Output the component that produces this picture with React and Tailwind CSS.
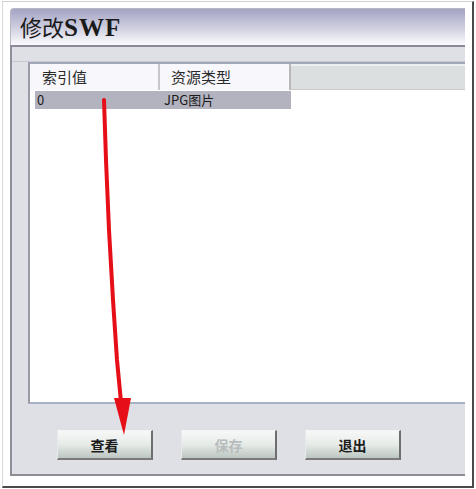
const CJK = { fontFamily: '"Noto Sans CJK SC", "Noto Sans", sans-serif' };

function Btn({ label, disabled }) {
  return (
    <button
      className={
        "w-[96px] h-[30px] border-t border-l border-t-[#f4f4f4] border-l-[#e8e8e8] border-r-2 border-b-2 border-r-[#6e6e6e] border-b-[#7a7a7a] bg-gradient-to-b from-[#f7f8f7] via-[#e6ebe8] to-[#bcc6c1] text-[14px] font-bold leading-none " +
        (disabled ? "text-[#b8bcbc]" : "text-[#1c1c1c]")
      }
      style={CJK}
    >
      {label}
    </button>
  );
}

export default function App() {
  return (
    <div className="relative w-[476px] h-[489px] bg-white overflow-hidden">
      <div className="ml-[2px] mt-[1px] w-[472px] h-[487px] border-t border-l border-t-[#d0d0d0] border-l-[#d8d8d8] border-r-2 border-b-2 border-r-[#4a4a4a] border-b-[#4a4a4a] pl-[7px] pt-[6px]">
        <div className="w-[455px] h-[468px] flex flex-col">
          {/* title bar */}
          <div className="h-[37px] rounded-tl-[4px] border-l border-t border-[#b8b8c4] bg-gradient-to-b from-[#a4a4c4] via-[#cdcddf] to-[#fbfbfd] flex items-center pl-[9px]">
            <span
              className="text-[22px] text-[#1a1a1a] leading-none"
              style={{ fontFamily: '"Liberation Serif", "Noto Sans CJK SC", serif' }}
            >
              修改<span className="text-[25px] font-semibold tracking-[1px]">SWF</span>
            </span>
          </div>
          <div className="h-[2px] bg-[#8a8a98]" />
          {/* body */}
          <div className="flex-1 flex flex-col bg-[#dfdfe6] border-l-2 border-[#8e8e9a] border-b-2 border-b-[#8c8c94]">
            <div className="h-[15px] border-b border-[#c8c8d2]" />
            <div className="ml-[16px] h-[342px] bg-white border-l-2 border-t-2 border-b-2 border-l-[#9a9aa6] border-t-[#a0a8ba] border-b-[#a6b2c4] flex flex-col">
              <div className="flex h-[26px] text-[15px] text-[#2a2a2a]" style={CJK}>
                <div className="w-[130px] bg-[#f8f8fc] border-r-2 border-r-[#c8c8cc] pl-[12px] flex items-center">
                  索引值
                </div>
                <div className="w-[131px] bg-[#f8f8fc] border-r-2 border-r-[#b8b8bc] pl-[11px] flex items-center">
                  资源类型
                </div>
                <div className="flex-1 bg-[#dcdfdf] border-t-2 border-t-[#eef0f0] border-b border-b-[#c8caca]" />
              </div>
              <div
                className="ml-[5px] mt-[1px] w-[256px] h-[18px] bg-[#b3b3bf] flex items-center text-[13px] text-[#1a1a1a]"
                style={CJK}
              >
                <div className="w-[129px] pl-[2px]">0</div>
                <div>JPG图片</div>
              </div>
            </div>
            <div className="flex gap-[28px] pl-[45px] mt-[26px]">
              <Btn label="查看" />
              <Btn label="保存" disabled />
              <Btn label="退出" />
            </div>
          </div>
        </div>
      </div>
      <svg className="absolute inset-0 pointer-events-none" width="476" height="489">
        <path
          d="M104 100 L106 160 L109 230 L113 300 L117 360 L121 402"
          stroke="#e60f18"
          strokeWidth="4"
          fill="none"
          strokeLinecap="round"
        />
        <polygon points="114,398 131,398 124,435" fill="#e60f18" />
      </svg>
    </div>
  );
}
